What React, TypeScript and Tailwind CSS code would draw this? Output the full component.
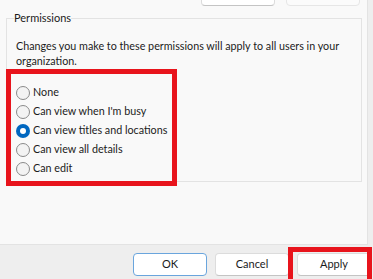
import { useState } from 'react';

const OPTIONS = [
  'None',
  "Can view when I'm busy",
  'Can view titles and locations',
  'Can view all details',
  'Can edit',
];

function Radio({ checked }: { checked: boolean }) {
  if (checked) {
    return (
      <span className="w-[14px] h-[14px] rounded-full bg-[#0067c0] flex items-center justify-center shrink-0">
        <span className="w-[6px] h-[6px] rounded-full bg-white" />
      </span>
    );
  }
  return <span className="w-[14px] h-[14px] rounded-full border border-[#8a8a8a] bg-[#f3f3f3] shrink-0" />;
}

export default function App() {
  const [selected, setSelected] = useState(2);

  return (
    <div className="relative w-[373px] h-[279px] overflow-hidden bg-[#eeeeee] text-[10.75px] text-[#1b1b1b] font-['Lato',sans-serif]">
      {/* Main panel */}
      <div className="flex flex-col w-[368px] h-[245px] bg-[#f9f9f9] border-r border-b border-[#e3e3e3]">
        <div className="flex justify-end gap-[11px] pr-[7px] -mt-[18px]">
          <button className="w-[74px] h-[24px] rounded-[4px] bg-white border border-[#dcdcdc] border-b-[#c4c4c4] leading-none pb-[4px]">
            Add
          </button>
          <button className="w-[74px] h-[24px] rounded-[4px] bg-[#fbfbfb] border border-[#e6e6e6] text-[#a0a0a0] leading-none pb-[4px]">
            Remove
          </button>
        </div>

        {/* Permissions group */}
        <fieldset className="mx-[6px] mt-[4px] h-[172px] w-[356px] border border-[#e3e3e3] px-[9px]">
          <legend className="ml-[-2px] leading-[16px] text-[11px]">Permissions</legend>
          <p className="mt-[12px] leading-[15px]">
            Changes you make to these permissions will apply to all users in your organization.
          </p>
          <div className="mt-[15px] flex flex-col">
            {OPTIONS.map((label, i) => (
              <label
                key={label}
                className="flex items-center gap-[3px] h-[19px] cursor-default"
                onClick={() => setSelected(i)}
              >
                <Radio checked={selected === i} />
                <span className="leading-none">{label}</span>
              </label>
            ))}
          </div>
        </fieldset>
      </div>

      {/* Footer buttons */}
      <div className="flex justify-end gap-[8px] pr-[2px] pt-[8px] text-[11px]">
        <button className="w-[74px] h-[23px] rounded-[4px] bg-white border border-[#6aa5dd]">OK</button>
        <button className="w-[74px] h-[23px] rounded-[4px] bg-white border border-[#dcdcdc] border-b-[#c4c4c4]">
          Cancel
        </button>
        <button className="w-[74px] h-[23px] rounded-[4px] bg-white border border-[#dcdcdc] border-b-[#c4c4c4]">
          Apply
        </button>
      </div>

      {/* Annotation boxes */}
      <div className="absolute left-[6px] top-[69px] w-[171px] h-[117px] border-[5px] border-[#e8141c]" />
      <div className="absolute left-[288px] top-[247px] w-[84px] h-[40px] border-[5px] border-[#e8141c]" />
    </div>
  );
}
